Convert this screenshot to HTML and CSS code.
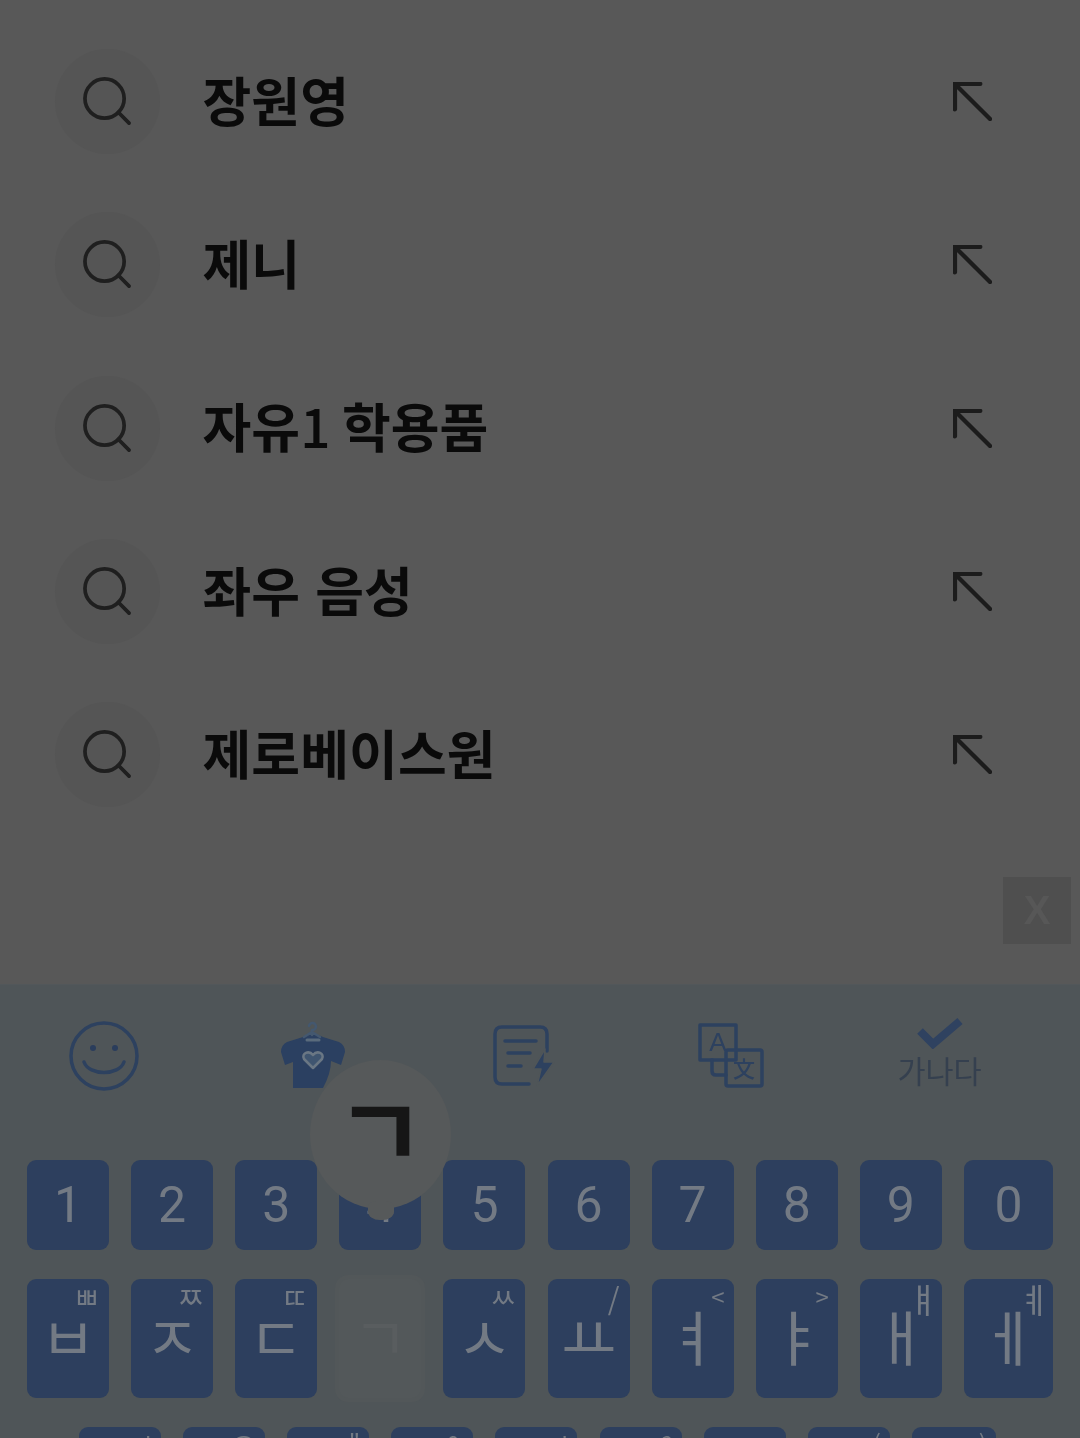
FILE: index.html
```html
<!DOCTYPE html>
<html lang="ko">
<head>
<meta charset="utf-8">
<title>검색</title>
<link rel="stylesheet" href="styles.css">
</head>
<body>
<div class="screen">
  <ul class="results">
    <li class="row"><span class="circle"><svg class="ico-search" viewBox="0 0 50 50"><circle cx="22" cy="22" r="20"/><path d="M36 36 47 47"/></svg></span><span class="term">장원영</span><svg class="ico-arrow" viewBox="0 0 40 40"><path d="M2 28V2H28M2 2 38 38"/></svg></li>
    <li class="row"><span class="circle"><svg class="ico-search" viewBox="0 0 50 50"><circle cx="22" cy="22" r="20"/><path d="M36 36 47 47"/></svg></span><span class="term">제니</span><svg class="ico-arrow" viewBox="0 0 40 40"><path d="M2 28V2H28M2 2 38 38"/></svg></li>
    <li class="row"><span class="circle"><svg class="ico-search" viewBox="0 0 50 50"><circle cx="22" cy="22" r="20"/><path d="M36 36 47 47"/></svg></span><span class="term">자유<span class="num">1</span> 학용품</span><svg class="ico-arrow" viewBox="0 0 40 40"><path d="M2 28V2H28M2 2 38 38"/></svg></li>
    <li class="row"><span class="circle"><svg class="ico-search" viewBox="0 0 50 50"><circle cx="22" cy="22" r="20"/><path d="M36 36 47 47"/></svg></span><span class="term">좌우 음성</span><svg class="ico-arrow" viewBox="0 0 40 40"><path d="M2 28V2H28M2 2 38 38"/></svg></li>
    <li class="row"><span class="circle"><svg class="ico-search" viewBox="0 0 50 50"><circle cx="22" cy="22" r="20"/><path d="M36 36 47 47"/></svg></span><span class="term">제로베이스원</span><svg class="ico-arrow" viewBox="0 0 40 40"><path d="M2 28V2H28M2 2 38 38"/></svg></li>
  </ul>

  <div class="ad-close">X</div>

  <section class="keyboard">
    <div class="toolbar">
      <div class="tool">
        <svg class="tool-svg" width="70" height="70" viewBox="0 0 70 70"><circle cx="35" cy="35" r="33"/><circle class="fill" cx="24" cy="27" r="3"/><circle class="fill" cx="46" cy="27" r="3"/><path d="M15 41C20 55 50 55 55 41"/></svg>
      </div>
      <div class="tool">
        <svg class="tool-svg" width="68" height="70" viewBox="0 0 68 70"><path class="solid" d="M24 16C29 13 39 13 44 16L60 21Q66 24 66 31L62 44 52 40Q52 52 44 67H14V41L6 44 2 31Q2 24 8 21Z"/><path class="neck" d="M28 19H40"/><path class="thin" d="M33 14V9a3.5 3.5 0 1 0-3-4M33 11 25 16M33 11 41 16"/><path class="heart" d="M34 47 25 38C22 32 30 29 34 34 38 29 46 32 43 38Z"/></svg>
      </div>
      <div class="tool tool-doc">
        <svg class="tool-svg" width="62" height="62" viewBox="0 0 62 62"><path d="M36 59H9Q2 59 2 52V9Q2 2 9 2H47Q54 2 54 9V26"/><path d="M12 16H43M15 28H37M15 41H28"/><path class="bolt" d="M52 24 40 44H48L44 61 61 37H51Z"/></svg>
      </div>
      <div class="tool">
        <svg class="tool-svg" width="66" height="66" viewBox="0 0 66 66"><rect x="2" y="2" width="36" height="35"/><path d="M14 37V48Q14 52 18 52H28"/><rect x="28" y="27" width="36" height="36" rx="2"/><text class="tool-glyph" x="20" y="28">A</text><text class="tool-glyph small" x="46" y="54">文</text></svg>
      </div>
      <div class="tool tool-label">
        <svg class="tool-svg check" width="46" height="32" viewBox="0 0 46 32"><path d="M3 14 16 27 43 4"/></svg>
        <span class="hangul-mode">가나다</span>
      </div>
    </div>

    <div class="keys">
      <div class="key-row digits">
        <div class="key">1</div><div class="key">2</div><div class="key">3</div><div class="key">4</div><div class="key">5</div><div class="key">6</div><div class="key">7</div><div class="key">8</div><div class="key">9</div><div class="key key-wide">0</div>
      </div>
      <div class="key-row letters">
        <div class="key"><b>ㅃ</b>ㅂ</div>
        <div class="key"><b>ㅉ</b>ㅈ</div>
        <div class="key"><b>ㄸ</b>ㄷ</div>
        <div class="key key-pressed">ㄱ</div>
        <div class="key"><b>ㅆ</b>ㅅ</div>
        <div class="key"><b class="slash">/</b>ㅛ</div>
        <div class="key"><b class="angle">&lt;</b>ㅕ</div>
        <div class="key"><b class="angle">&gt;</b>ㅑ</div>
        <div class="key"><b class="tall">ㅒ</b>ㅐ</div>
        <div class="key key-wide"><b class="tall">ㅖ</b>ㅔ</div>
      </div>
      <div class="key-row letters home">
        <div class="key"><b class="angle">!</b>ㅁ</div>
        <div class="key"><b>@</b>ㄴ</div>
        <div class="key"><b class="angle">"</b>ㅇ</div>
        <div class="key"><b>&amp;</b>ㄹ</div>
        <div class="key"><b class="angle">!</b>ㅎ</div>
        <div class="key"><b class="angle">?</b>ㅗ</div>
        <div class="key"><b class="angle">+</b>ㅓ</div>
        <div class="key"><b class="angle">(</b>ㅏ</div>
        <div class="key key-last"><b class="angle">)</b>ㅣ</div>
      </div>
    </div>

    <div class="bubble"><span class="bubble-char">ㄱ</span></div>
  </section>
</div>
</body>
</html>
```

FILE: styles.css
```css
* { box-sizing: border-box; }
html, body { margin: 0; padding: 0; }
body { background: #585858; font-family: "Noto Sans CJK KR", "Noto Sans", sans-serif; }

.screen {
  position: relative;
  width: 1080px;
  height: 1438px;
  overflow: hidden;
  display: flex;
  flex-direction: column;
  background: #585858;
  filter: blur(0.7px);
}

.results {
  list-style: none;
  margin: 0;
  padding: 20px 0 0;
  height: 984px;
  flex: none;
}
.row {
  height: 163.25px;
  display: flex;
  align-items: center;
  padding: 0 88px 0 55px;
}
.circle {
  width: 105px;
  height: 105px;
  border-radius: 50%;
  background: #555555;
  display: flex;
  align-items: center;
  justify-content: center;
  flex: none;
}
.ico-search { width: 49px; height: 49px; fill: none; stroke: #1f1f1f; stroke-width: 3.8; stroke-linecap: round; }
.term {
  margin-left: 42.5px;
  padding-bottom: 4px;
  flex: 1;
  font-size: 53px;
  line-height: 1.2;
  font-weight: 700;
  color: #0a0a0a;
  letter-spacing: 0.1px;
}
.num { letter-spacing: -3.5px; font-weight: 500; }
.ico-arrow { width: 39px; height: 39px; flex: none; fill: none; stroke: #1c1c1c; stroke-width: 4.4; stroke-linecap: round; }

.ad-close {
  position: absolute;
  left: 1003px;
  top: 877px;
  width: 68px;
  height: 67px;
  background: #4f4f4f;
  color: #575757;
  font: 700 40px/67px "Liberation Sans", sans-serif;
  text-align: center;
}

.keyboard {
  position: relative;
  flex: 1;
  background: #4f5558;
  border-top: 1px solid #52575a;
  min-height: 0;
}
.toolbar {
  height: 175px;
  padding: 32px 36px 0 0;
  display: grid;
  grid-template-columns: repeat(5, 1fr);
  align-items: start;
}
.tool { height: 78px; display: flex; align-items: center; justify-content: center; }
.tool-doc { padding-left: 4px; }
.tool-svg { fill: none; stroke: #2d415f; stroke-width: 3.5; stroke-linecap: round; stroke-linejoin: round; }
.tool-svg .fill { fill: #2a3d5c; stroke: none; }
.tool-svg .solid { fill: #2b4061; stroke: none; }
.tool-svg .thin { stroke: #44586f; stroke-width: 2.5; }
.tool-svg .neck { stroke: #5a6b7c; stroke-width: 3; }
.tool-svg .heart { fill: #3f5570; stroke: #6a7784; stroke-width: 2.5; }
.tool-svg .bolt { fill: #2d415f; stroke: #4f5558; stroke-width: 1.5; }
.tool-glyph { font: 400 26px "Liberation Sans", sans-serif; fill: #2d415f; stroke: none; text-anchor: middle; }
.tool-glyph.small { font: 500 22px "Noto Sans CJK KR", sans-serif; }
.tool-label { flex-direction: column; justify-content: flex-start; }
.check { stroke: #2f4260; stroke-width: 8; stroke-linecap: butt; stroke-linejoin: miter; }
.hangul-mode { font-size: 30.5px; line-height: 36px; color: #35404f; margin-top: 3px; font-weight: 400; }

.keys { padding-left: 27px; }
.key-row { display: flex; gap: 22.12px; margin-bottom: 29px; }
.key {
  position: relative;
  width: 82px;
  flex: none;
  border-radius: 9px;
  background: #2d3f5e;
  color: #737a84;
  text-align: center;
}
.key-wide { width: 89px; }
.key-last { width: 84px; }
.digits .key { height: 90px; font: 400 50px/90px Roboto, sans-serif; }
.letters .key { height: 119px; font-size: 60px; font-weight: 400; line-height: 112px; }
.letters .key b {
  position: absolute;
  top: 1px;
  right: 9px;
  font-size: 29px;
  line-height: 32px;
  font-weight: 400;
}
.letters .key b.angle { top: 1px; right: 9px; font-size: 24px; }
.letters .key b.slash { top: 4px; right: 10px; font-size: 30px; }
.letters .key b.tall { top: 1px; right: 3px; font-size: 34px; line-height: 38px; }
.letters .key-pressed { background: #53585a; color: #595d5f; box-shadow: 0 0 0 4px #525759; }
.home { padding-left: 52px; }

.bubble {
  position: absolute;
  left: 310px;
  top: 75px;
  width: 141px;
  height: 149px;
  border-radius: 50%;
  background: #56595a;
  text-align: center;
}
.bubble::after {
  content: "";
  position: absolute;
  left: 58px;
  top: 141px;
  width: 26px;
  height: 19px;
  background: #56595a;
  border-radius: 30% 30% 45% 45%;
}
.bubble-char {
  display: block;
  font-size: 98px;
  line-height: 130px;
  font-weight: 700;
  color: #161616;
}
```
